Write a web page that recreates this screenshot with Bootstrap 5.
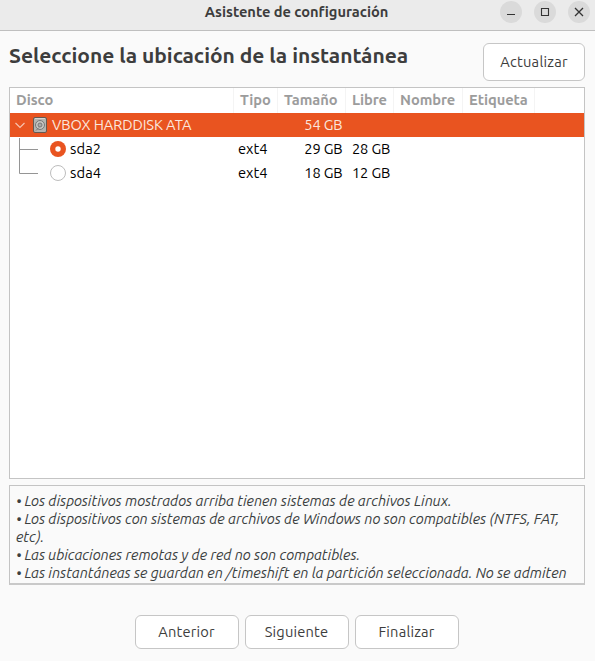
<!DOCTYPE html>
<html lang="es">
<head>
<meta charset="utf-8">
<meta name="viewport" content="width=device-width, initial-scale=1">
<title>Asistente de configuración</title>
<link href="https://cdn.jsdelivr.net/npm/bootstrap@5.3.0/dist/css/bootstrap.min.css" rel="stylesheet">
<style>
  body { font-family: Ubuntu, "Noto Sans", sans-serif; font-size: 14.667px; line-height: 18px; color: #3d3d3d; background: #fafafa; height: 661px; overflow: hidden; }
  .titlebar { height: 31px; background: #ebebeb; border-bottom: 1px solid #bfbfbf; padding: 1px 5px 0 97px; }
  .titlebar h1 { font-size: 14.667px; line-height: 22px; font-weight: 700; letter-spacing: -.04px; }
  .win-btn { width: 22px; height: 22px; background: #dadada; color: #333; }
  .heading { font-size: 21px; line-height: 25px; font-weight: 700; letter-spacing: -.035px; }
  .gtk-btn { --bs-btn-bg: #fff; --bs-btn-border-color: #c6c6c6; --bs-btn-color: #3d3d3d; --bs-btn-hover-bg: #f5f5f5; --bs-btn-hover-border-color: #bbb; --bs-btn-border-radius: 6px; --bs-btn-padding-x: 0; --bs-btn-padding-y: 0; --bs-btn-font-size: 14.667px; --bs-btn-line-height: 18px; width: 104px; height: 34px; letter-spacing: .2px; }
  .refresh { width: 102px; height: 38px; letter-spacing: .25px; }
  .content { padding: 12px 10px 0 9px; }
  .device-list { height: 392px; margin-top: 6px; border: 1px solid #c4c4c4; background: #fff; }
  .devices { table-layout: fixed; --bs-table-bg: transparent; color: #000; }
  .devices th, .devices td { height: 24px; padding: 0 3px 0 5px; line-height: 18px; vertical-align: middle; white-space: nowrap; }
  .devices th { height: 25px; padding: 0 0 2px 6.500px; font-weight: 700; letter-spacing: -.05px; color: #9c9c9c; border-right: 1px solid #f4f4f4; }
  .devices th:first-child { padding-left: 6px; }
  .devices th:last-child { border-right: 0; }
  .devices td.free { padding: 0 0 0 7px; letter-spacing: -.15px; }
  .devices td.text-end { padding-right: 2.500px; letter-spacing: -.15px; }
  .devices td:first-child { padding: 0; }
  .devices tr.chosen td { background: #e95420; color: #fbe6dd; }
  .disk-name { margin-left: 5px; letter-spacing: -.1px; }
  .part-name { margin-left: 4px; letter-spacing: .1px; }
  .info { height: 100px; margin-top: 6px; border: 1px solid #c4c4c4; border-bottom: 2px solid #c9c9c9; padding: 6px 6px 0; font-style: italic; letter-spacing: -.055px; color: #3b3f3f; }
  .actions { gap: 6px; margin-top: 30px; padding-right: 1px; }
  svg { display: block; flex: none; }
</style>
</head>
<body>
<header class="titlebar d-flex align-items-start">
  <h1 class="flex-grow-1 text-center text-nowrap m-0">Asistente de configuración</h1>
  <div class="d-flex gap-2 ps-1">
    <div class="win-btn rounded-circle me-1"><svg width="22" height="22"><path d="M7 13.500h8" stroke="currentColor"/></svg></div>
    <div class="win-btn rounded-circle me-1"><svg width="22" height="22"><path d="M7.500 7.500h7v7h-7z" fill="none" stroke="currentColor" stroke-width="1.100"/></svg></div>
    <div class="win-btn rounded-circle"><svg width="22" height="22"><path d="M7 7l8 8M15 7l-8 8" stroke="currentColor" stroke-width="1.300"/></svg></div>
  </div>
</header>
<main class="content">
  <div class="d-flex justify-content-between align-items-start">
    <h2 class="heading m-0 text-nowrap">Seleccione la ubicación de la instantánea</h2>
    <button class="btn gtk-btn refresh" type="button">Actualizar</button>
  </div>
  <div class="device-list">
    <table class="table table-borderless devices m-0">
      <colgroup><col width="223"><col width="44"><col width="68"><col width="48"><col width="69"><col width="72"><col></colgroup>
      <thead><tr><th>Disco</th><th>Tipo</th><th>Tamaño</th><th>Libre</th><th>Nombre</th><th>Etiqueta</th><th></th></tr></thead>
      <tbody>
        <tr class="chosen">
          <td><div class="d-flex align-items-center">
            <svg width="37" height="24"><path d="M5.500 10l4.500 4.500L14.500 10" fill="none" stroke="#f7c3ae" stroke-width="1.200"/>
              <rect x="23.500" y="4.500" width="13" height="15" rx="1.500" fill="#b4b4b0" stroke="#655a52"/><path d="M25 5.500h10" stroke="#d6d6d2"/><circle cx="30" cy="12" r="4.500" fill="#c6c6c2" stroke="#777"/><circle cx="30" cy="12" r="2" fill="#aaa" stroke="#777"/><path d="M26 17.500l3-3" stroke="#777"/></svg>
            <span class="disk-name">VBOX HARDDISK ATA</span></div></td>
          <td></td><td class="text-end">54 GB</td><td></td><td></td><td></td><td></td>
        </tr>
        <tr>
          <td><div class="d-flex align-items-center">
            <svg width="56" height="24"><path d="M9.500 1v23M9.500 12.500H28" fill="none" stroke="#959595"/><circle cx="48" cy="12" r="8" fill="#e95420"/><circle cx="48" cy="12" r="2.700" fill="#fff"/></svg>
            <span class="part-name">sda2</span></div></td>
          <td>ext4</td><td class="text-end">29 GB</td><td class="free">28 GB</td><td></td><td></td><td></td>
        </tr>
        <tr>
          <td><div class="d-flex align-items-center">
            <svg width="56" height="24"><path d="M9.500 0v12.500H28" fill="none" stroke="#959595"/><circle cx="48" cy="12" r="7.500" fill="#fff" stroke="#bdbdbd"/></svg>
            <span class="part-name">sda4</span></div></td>
          <td>ext4</td><td class="text-end">18 GB</td><td class="free">12 GB</td><td></td><td></td><td></td>
        </tr>
      </tbody>
    </table>
  </div>
  <div class="info overflow-hidden">
    <div>• Los dispositivos mostrados arriba tienen sistemas de archivos Linux.</div>
    <div>• Los dispositivos con sistemas de archivos de Windows no son compatibles (NTFS, FAT, etc).</div>
    <div>• Las ubicaciones remotas y de red no son compatibles.</div>
    <div class="text-nowrap">• Las instantáneas se guardan en /timeshift en la partición seleccionada. No se admiten</div>
  </div>
  <div class="actions d-flex justify-content-center">
    <button class="btn gtk-btn" type="button">Anterior</button>
    <button class="btn gtk-btn" type="button">Siguiente</button>
    <button class="btn gtk-btn" type="button">Finalizar</button>
  </div>
</main>
<script src="https://cdn.jsdelivr.net/npm/bootstrap@5.3.0/dist/js/bootstrap.bundle.min.js"></script>
</body>
</html>
